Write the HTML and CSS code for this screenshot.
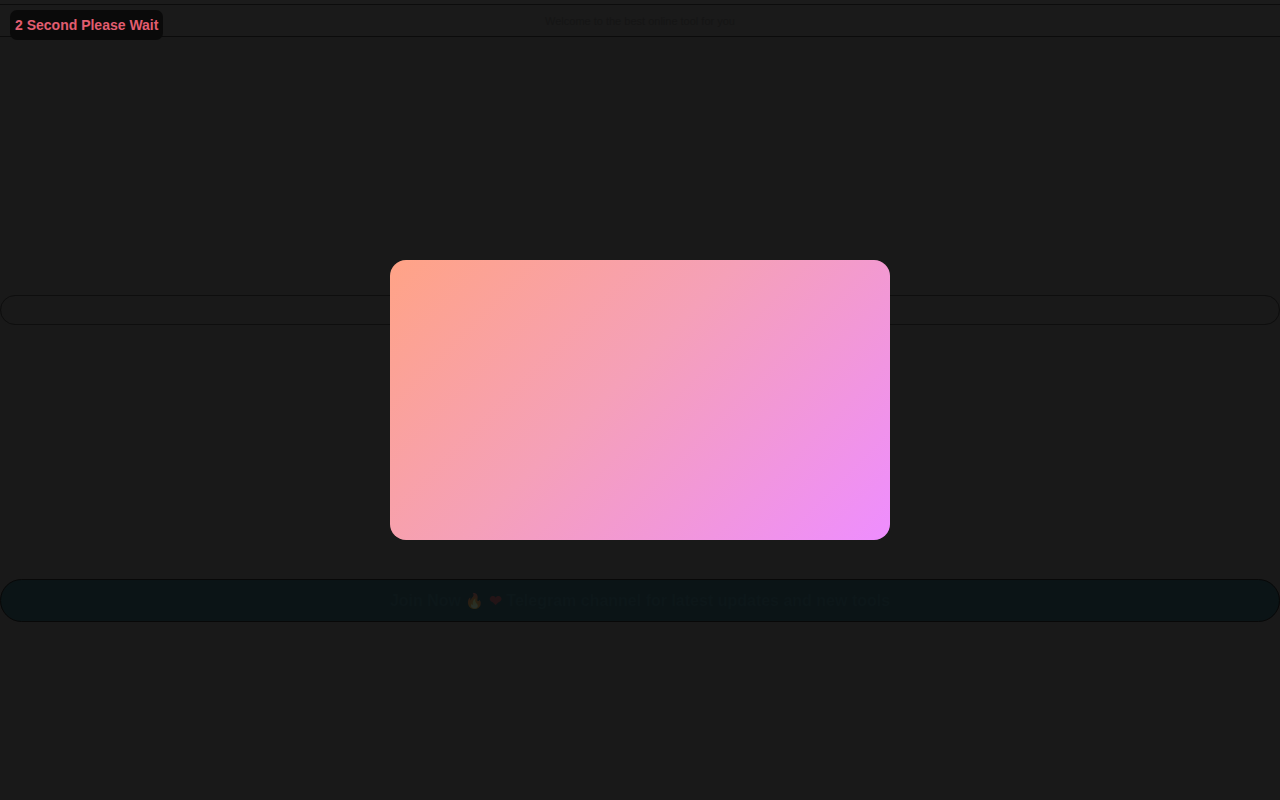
FILE: index.html
```html
<!DOCTYPE html>
<html lang="en">
<head>
<meta charset="utf-8">
<title>Please Wait</title>
<link rel="stylesheet" href="styles.css">
</head>
<body>
<div class="page">
  <div class="topstrip"></div>
  <header class="header">
    <span class="header-text">Welcome to the best online tool for you</span>
  </header>
  <main class="main">
    <div class="search"></div>
    <div class="notice">
      <span class="notice-text">Join Now <span class="e1">🔥</span> <span class="e2">❤</span> Telegram channel for latest updates and new tools</span>
    </div>
  </main>
</div>
<div class="wait-badge">2 Second Please Wait</div>
<div class="modal-layer">
  <div class="modal"></div>
</div>
</body>
</html>
```
FILE: styles.css
```css
html, body {
  margin: 0;
  padding: 0;
}
body {
  background: #191919;
  font-family: "Liberation Sans", Arial, sans-serif;
  height: 800px;
  overflow: hidden;
}
.page {
  display: flex;
  flex-direction: column;
}
.topstrip {
  height: 4px;
  background: #1b1b1b;
  border-bottom: 1px solid #0c0c0c;
}
.header {
  height: 31px;
  background: #1a1a1a;
  border-bottom: 1px solid #0b0b0b;
  display: flex;
  align-items: center;
  justify-content: center;
}
.header-text {
  font-size: 11px;
  color: #151515;
}
.main {
  display: flex;
  flex-direction: column;
  padding-top: 258px;
}
.search {
  height: 28px;
  border: 1px solid #0e0e0e;
  border-radius: 15px;
  background: #191919;
}
.notice {
  margin-top: 254px;
  height: 41px;
  border: 1px solid #080808;
  border-radius: 22px;
  background: #0b1416;
  display: flex;
  align-items: center;
  justify-content: center;
}
.notice-text {
  font-size: 16px;
  font-weight: bold;
  color: #1b2c32;
  opacity: 0.12;
}
.e1 { font-size: 15px; }
.e2 { font-size: 15px; color: #d01818; }
.wait-badge {
  position: absolute;
  left: 10px;
  top: 10px;
  height: 30px;
  padding: 0 5px;
  display: flex;
  align-items: center;
  background: #0a0a0a;
  border-radius: 7px;
  color: #e25d70;
  font-size: 14px;
  font-weight: bold;
}
.modal-layer {
  position: fixed;
  inset: 0;
  display: flex;
  align-items: center;
  justify-content: center;
  pointer-events: none;
}
.modal {
  width: 500px;
  height: 280px;
  border-radius: 16px;
  background: linear-gradient(135deg, #ffa386 0%, #f5a0b8 45%, #ee8dff 100%);
}
```
